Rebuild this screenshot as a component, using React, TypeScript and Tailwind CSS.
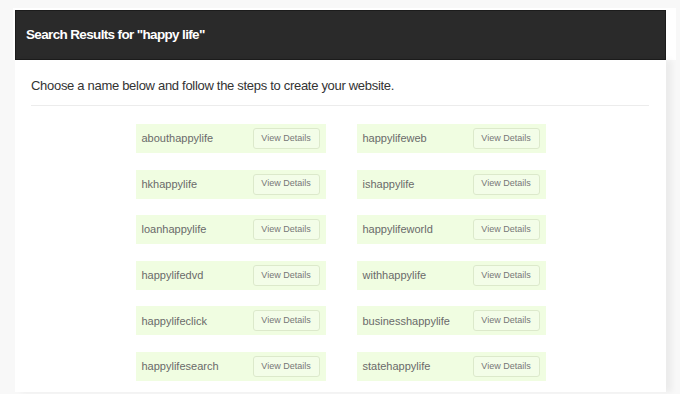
import React from "react";

const left = ["abouthappylife", "hkhappylife", "loanhappylife", "happylifedvd", "happylifeclick", "happylifesearch"];
const right = ["happylifeweb", "ishappylife", "happylifeworld", "withhappylife", "businesshappylife", "statehappylife"];

function Item({ name }: { name: string }) {
  return (
    <div className="flex h-[29px] items-center justify-between bg-[#f0fde1] pl-[6px] pr-[6px]">
      <span className="text-[11px] text-[#6a6a6a]">{name}</span>
      <button className="h-[21px] w-[67px] rounded-[3px] border border-[#dce9cb] bg-[#f3fde8] text-[9px] text-[#777]">
        View Details
      </button>
    </div>
  );
}

export default function App() {
  const rows = left.map((l, i) => [l, right[i]]);
  return (
    <div
      className="h-[394px] w-[680px] overflow-hidden bg-[#f8f8f8]"
      style={{ fontFamily: "'Liberation Sans', Arial, sans-serif" }}
    >
      <div className="ml-[13px] mt-[8px] w-[663px] bg-white pl-[2px] pr-[10px] pt-[2px]">
        <div className="flex h-[50px] items-center border border-[#1c1c1c] bg-[#2a2a2a] pl-[10px]">
          <h1 className="text-[13.5px] font-bold tracking-[-0.65px] text-white">Search Results for "happy life"</h1>
        </div>
      </div>
      <div className="ml-[15px] h-[332px] w-[651px] bg-white shadow-[6px_0_6px_rgba(0,0,0,0.05)]">
        <div className="px-[16px] pt-[16px]">
          <p className="text-[13px] leading-[20px] tracking-[-0.3px] text-[#333]">
            Choose a name below and follow the steps to create your website.
          </p>
          <div className="mt-[9px] h-px w-[618px] bg-[#ececec]" />
        </div>
        <div className="mt-[18px] flex flex-col items-center gap-[16.6px]">
          {rows.map(([a, b]) => (
            <div key={a} className="grid grid-cols-[190px_189px] gap-[31px]">
              <Item name={a} />
              <Item name={b} />
            </div>
          ))}
        </div>
      </div>
    </div>
  );
}
